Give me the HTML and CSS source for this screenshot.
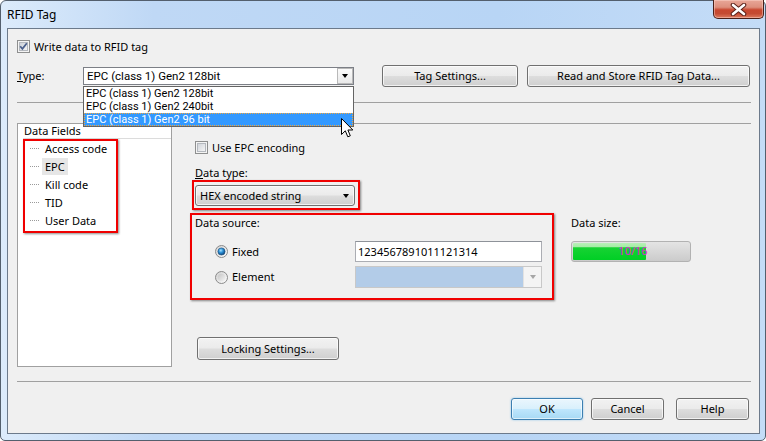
FILE: index.html
```html
<!DOCTYPE html>
<html>
<head>
<meta charset="utf-8">
<title>RFID Tag</title>
<link rel="stylesheet" href="styles.css">
</head>
<body>
<div class="window">
  <div class="titlebar">
    <span class="title">RFID Tag</span>
    <div class="close">
      <svg width="19" height="13" viewBox="0 0 19 13">
        <path d="M4 2 L15 11 M15 2 L4 11" stroke="#5a2018" stroke-width="4.6" stroke-linecap="round"/>
        <path d="M4 2 L15 11 M15 2 L4 11" stroke="#ffffff" stroke-width="2.6" stroke-linecap="round"/>
      </svg>
    </div>
  </div>
  <div class="content">
    <div class="row-write">
      <span class="chk">
        <svg width="13" height="13" viewBox="0 0 13 13">
          <defs><linearGradient id="g1" x1="0" y1="0" x2="1" y2="1"><stop offset="0" stop-color="#c9ced6"/><stop offset="1" stop-color="#f7f7f7"/></linearGradient></defs>
          <rect x="0.5" y="0.5" width="12" height="12" fill="#f4f4f4" stroke="#8e8f8f"/>
          <rect x="2.5" y="2.5" width="8" height="8" fill="url(#g1)" stroke="#b4b8be"/>
          <path d="M3.2 6.2 L5.4 8.8 L9.8 3.2" fill="none" stroke="#4a5f8c" stroke-width="1.7"/>
        </svg>
      </span>
      <span class="lbl">Write data to RFID tag</span>
    </div>

    <div class="row-type">
      <span class="type-label"><span class="ul">T</span>ype:</span>
      <div class="combo-wrap">
        <div class="combo">
          <span class="combo-text">EPC (class 1) Gen2 128bit</span>
          <span class="combo-btn"><span class="tri"></span></span>
        </div>
        <ul class="droplist">
          <li>EPC (class 1) Gen2 128bit</li>
          <li>EPC (class 1) Gen2 240bit</li>
          <li class="sel">EPC (class 1) Gen2 96 bit</li>
        </ul>
        <svg class="cursor" width="13" height="21" viewBox="0 0 13 21">
          <path d="M0.5 0.5 L0.5 16.5 L4.3 12.8 L6.8 18.8 L9.3 17.8 L6.9 12 L11.8 12 Z" fill="#ffffff" stroke="#000000" stroke-width="1" stroke-linejoin="miter"/>
        </svg>
      </div>
      <button class="btn btn-tag">Tag Settings...</button>
      <button class="btn btn-read">Read and Store RFID Tag Data...</button>
    </div>

    <div class="sep sep1"></div>

    <div class="main">
      <div class="tree">
        <div class="tree-head">Data Fields</div>
        <ul class="tree-items">
          <li><span class="dots"></span><span class="item">Access code</span></li>
          <li><span class="dots"></span><span class="item selected">EPC</span></li>
          <li><span class="dots"></span><span class="item">Kill code</span></li>
          <li><span class="dots"></span><span class="item">TID</span></li>
          <li><span class="dots"></span><span class="item">User Data</span></li>
        </ul>
        <div class="annot annot-tree"></div>
      </div>

      <div class="pane">
        <div class="use-epc">
          <span class="chk">
            <svg width="13" height="13" viewBox="0 0 13 13">
              <defs><linearGradient id="g2" x1="0" y1="0" x2="1" y2="1"><stop offset="0" stop-color="#cfd3d9"/><stop offset="1" stop-color="#f7f7f7"/></linearGradient></defs>
              <rect x="0.5" y="0.5" width="12" height="12" fill="#f4f4f4" stroke="#8e8f8f"/>
              <rect x="2.5" y="2.5" width="8" height="8" fill="url(#g2)" stroke="#b4b8be"/>
            </svg>
          </span>
          <span class="lbl">Use EPC encoding</span>
        </div>

        <div class="plabel dtype"><span class="ul">D</span>ata type:</div>

        <div class="redbox red1">
          <div class="ddl">
            <span class="ddl-text">HEX encoded string</span>
            <span class="tri"></span>
          </div>
        </div>

        <div class="src-row">
          <div class="redbox red2">
            <div class="plabel src-label">Data source:</div>
            <div class="opt-row fixed-row">
              <div class="opt">
                <svg width="13" height="13" viewBox="0 0 13 13">
                  <defs>
                    <linearGradient id="g3" x1="0" y1="0" x2="1" y2="1"><stop offset="0" stop-color="#d0d0d0"/><stop offset="1" stop-color="#ffffff"/></linearGradient>
                    <radialGradient id="g4" cx="0.4" cy="0.35" r="0.7"><stop offset="0" stop-color="#a6e2ff"/><stop offset="0.45" stop-color="#2a8fd6"/><stop offset="1" stop-color="#0b3d6e"/></radialGradient>
                  </defs>
                  <circle cx="6.5" cy="6.5" r="6" fill="url(#g3)" stroke="#8a8a8a"/>
                  <circle cx="6.5" cy="6.5" r="3.6" fill="url(#g4)" stroke="#1d4f7c" stroke-width="0.6"/>
                </svg>
                <span class="lbl">Fixed</span>
              </div>
              <div class="textbox">1234567891011121314</div>
            </div>
            <div class="opt-row elem-row">
              <div class="opt">
                <svg width="13" height="13" viewBox="0 0 13 13">
                  <defs>
                    <linearGradient id="g5" x1="0" y1="0" x2="1" y2="1"><stop offset="0" stop-color="#cfcfcf"/><stop offset="1" stop-color="#ffffff"/></linearGradient>
                    <linearGradient id="g6" x1="0" y1="0" x2="1" y2="1"><stop offset="0" stop-color="#c4c4c4"/><stop offset="1" stop-color="#f4f4f4"/></linearGradient>
                  </defs>
                  <circle cx="6.5" cy="6.5" r="6" fill="url(#g5)" stroke="#8a8a8a"/>
                  <circle cx="6.5" cy="6.5" r="3.8" fill="url(#g6)"/>
                </svg>
                <span class="lbl">Element</span>
              </div>
              <div class="dcombo">
                <span class="dcombo-field"></span>
                <span class="dcombo-btn"><span class="tri gray"></span></span>
              </div>
            </div>
          </div>

          <div class="size">
            <div class="plabel size-label">Data size:</div>
            <div class="progress">
              <div class="fill" style="width:62.5%"></div>
              <span class="ptext">10/16</span>
            </div>
          </div>
        </div>

        <button class="btn btn-lock">Locking Settings...</button>
      </div>
    </div>

    <div class="sep sep2"></div>

    <div class="footer">
      <button class="btn btn-ok">OK</button>
      <button class="btn btn-cancel">Cancel</button>
      <button class="btn btn-help">Help</button>
    </div>
  </div>
</div>
</body>
</html>
```

FILE: styles.css
```css
* { box-sizing: border-box; }
html, body { margin: 0; padding: 0; }
body {
  width: 766px;
  height: 441px;
  overflow: hidden;
  background: #ffffff;
  font-family: "Noto Sans", "Open Sans", "DejaVu Sans", sans-serif;
  font-size: 11px;
  color: #000;
}
ul { margin: 0; padding: 0; list-style: none; }
.ul { text-decoration: underline; }

.window {
  width: 766px;
  height: 441px;
  background: linear-gradient(90deg, #dcebfb 0%, #bfd8f5 20%, #b8d5f5 65%, #c4dcf7 100%);
  border: 1px solid #535f6d;
  border-radius: 6px 6px 5px 5px;
  padding: 0 5px 6px 6px;
  display: flex;
  flex-direction: column;
}

.titlebar {
  height: 27px;
  display: flex;
  align-items: flex-start;
  flex: none;
}
.title {
  padding-top: 7px;
  line-height: 14px;
  font-size: 12px;
  color: #000;
}
.close {
  margin-left: auto;
  margin-right: -4px;
  margin-top: -1px;
  width: 51px;
  height: 19px;
  border: 1px solid #4a1f18;
  border-top: none;
  border-radius: 0 0 5px 5px;
  background: linear-gradient(#e8a798 0%, #dd8f7d 40%, #c8472f 55%, #c44a32 75%, #dc7a5e 100%);
  box-shadow: inset 0 0 0 1px rgba(255, 220, 210, 0.45);
  display: flex;
  align-items: center;
  justify-content: center;
}

.content {
  flex: 1;
  background: #f0f0f0;
  border: 1px solid #6c7a8b;
  padding: 0 8px 0 9px;
  display: flex;
  flex-direction: column;
}

.chk { width: 13px; height: 13px; display: block; flex: none; }
.chk svg { display: block; }
.lbl { line-height: 14px; white-space: nowrap; }

.row-write {
  margin-top: 11px;
  height: 13px;
  display: flex;
  align-items: center;
  gap: 4px;
}

.row-type {
  margin-top: 12px;
  height: 22px;
  display: flex;
  align-items: center;
}
.type-label { width: 66px; line-height: 14px; }
.combo-wrap {
  position: relative;
  width: 271px;
  height: 18px;
}
.combo {
  width: 271px;
  height: 18px;
  background: #fff;
  border: 1px solid #7c7f86;
  display: flex;
  align-items: center;
}
.combo-text {
  flex: 1;
  padding-left: 3px;
  line-height: 14px;
  font-family: Roboto, "Noto Sans", sans-serif;
  font-size: 11.5px;
  white-space: nowrap;
}
.combo-btn {
  width: 16px;
  height: 16px;
  border: 1px solid #b9b9b9;
  background: linear-gradient(#fbfbfb, #e9e9e9);
  display: flex;
  align-items: center;
  justify-content: center;
}
.tri {
  width: 0;
  height: 0;
  border-left: 3.5px solid transparent;
  border-right: 3.5px solid transparent;
  border-top: 4px solid #000;
}
.tri.gray { border-top-color: #a6a6a6; }

.droplist {
  position: absolute;
  left: 0;
  top: 19px;
  width: 271px;
  background: #fff;
  border: 1px solid #646464;
  z-index: 5;
}
.droplist li {
  height: 13px;
  line-height: 13px;
  font-family: Roboto, "Noto Sans", sans-serif;
  font-size: 11px;
  padding-left: 2px;
  white-space: nowrap;
}
.droplist li.sel {
  background: #3399ff;
  color: #fff;
  outline: 1px dotted #f3a73c;
  outline-offset: -1px;
}
.cursor {
  position: absolute;
  left: 258px;
  top: 51px;
  z-index: 6;
}

.btn {
  font-family: inherit;
  font-size: 11px;
  color: #000;
  height: 22px;
  padding: 0;
  border: 1px solid #707070;
  border-radius: 3px;
  background: linear-gradient(#f2f2f2 0%, #ebebeb 48%, #dddddd 52%, #cfcfcf 100%);
  box-shadow: inset 0 0 0 1px rgba(255, 255, 255, 0.7);
  line-height: 18px;
  text-align: center;
  white-space: nowrap;
}
.btn-tag { margin-left: 28px; width: 136px; }
.btn-read { margin-left: 9px; width: 223px; }

.sep { height: 1px; background: #a0a0a0; flex: none; }
.sep1 { margin-top: 15px; }
.sep2 { margin-top: 14px; }

.main {
  margin-top: 20px;
  display: flex;
  align-items: flex-start;
  height: 244px;
}
.tree {
  position: relative;
  width: 155px;
  height: 244px;
  background: #fff;
  border: 1px solid #a0a0a0;
  flex: none;
}
.tree-head {
  height: 15px;
  line-height: 14px;
  border-bottom: 1px solid #dcdcdc;
  margin-left: 5px;
  padding-left: 1px;
}
.tree-items li {
  height: 18px;
  display: flex;
  align-items: center;
}
.dots {
  margin-left: 12px;
  width: 9px;
  border-top: 1px dotted #9a9a9a;
}
.item {
  margin-left: 3px;
  padding: 0 3px;
  height: 17px;
  line-height: 17px;
  white-space: nowrap;
}
.item.selected { background: #e6e6e6; }
.annot {
  position: absolute;
  border: 2px solid #f00000;
  box-shadow: 1px 1px 2px rgba(0, 0, 0, 0.45);
}
.annot-tree { left: 5px; top: 15px; width: 95px; height: 94px; }

.pane {
  flex: 1;
  border-top: 1px solid #a0a0a0;
  height: 244px;
  display: flex;
  flex-direction: column;
  align-items: flex-start;
}
.use-epc {
  margin-top: 17px;
  margin-left: 23px;
  height: 13px;
  display: flex;
  align-items: center;
  gap: 4px;
}
.plabel { line-height: 14px; height: 14px; white-space: nowrap; }
.dtype { margin-top: 12px; margin-left: 23px; }

.redbox {
  border: 2px solid #f00000;
  box-shadow: 1px 1px 2px rgba(0, 0, 0, 0.45);
}
.red1 {
  margin-left: 20px;
  width: 168px;
  height: 30px;
  padding: 3px 0 0 1px;
}
.ddl {
  width: 160px;
  height: 21px;
  border: 1px solid #707070;
  border-radius: 3px;
  background: linear-gradient(#f2f2f2 0%, #ebebeb 48%, #dddddd 52%, #cfcfcf 100%);
  box-shadow: inset 0 0 0 1px rgba(255, 255, 255, 0.7);
  display: flex;
  align-items: center;
  padding: 0 5px 0 4px;
}
.ddl-text { flex: 1; line-height: 14px; }

.src-row {
  margin-top: 3px;
  display: flex;
  align-items: flex-start;
}
.red2 {
  margin-left: 18px;
  width: 364px;
  height: 87px;
  display: flex;
  flex-direction: column;
}
.src-label { margin-top: 1px; margin-left: 3px; }
.opt-row { display: flex; align-items: center; }
.fixed-row { margin-top: 11px; height: 21px; }
.elem-row { margin-top: 4px; height: 22px; }
.opt {
  width: 163px;
  padding-left: 23px;
  display: flex;
  align-items: center;
  gap: 4px;
}
.opt svg { display: block; flex: none; }
.textbox {
  width: 187px;
  height: 21px;
  background: #fff;
  border: 1px solid #abadb3;
  border-top-color: #8e9299;
  padding-left: 2px;
  line-height: 19px;
}
.dcombo {
  width: 187px;
  height: 22px;
  border: 1px solid #c8c8c8;
  display: flex;
}
.dcombo-field { flex: 1; background: #b3cce8; }
.dcombo-btn {
  width: 18px;
  background: #f4f4f4;
  border-left: 1px solid #e2e2e2;
  display: flex;
  align-items: center;
  justify-content: center;
}

.size { margin-left: 17px; margin-top: 3px; }
.progress {
  position: relative;
  margin-top: 11px;
  width: 120px;
  height: 21px;
  border: 1px solid #b2b2b2;
  border-radius: 3px;
  background: linear-gradient(#e4e4e4, #cbcbcb);
  padding: 1px;
  display: flex;
}
.fill {
  height: 100%;
  border-radius: 1px;
  background: linear-gradient(#b8f0b8 0%, #a6eca6 22%, #17d233 28%, #00cf25 100%);
}
.ptext {
  position: absolute;
  left: 0;
  right: 0;
  top: 2px;
  padding-left: 4px;
  text-align: center;
  line-height: 14px;
  color: #e020d8;
}

.btn-lock { margin-top: 37px; margin-left: 25px; width: 142px; height: 23px; }

.footer {
  margin-top: 16px;
  display: flex;
  justify-content: flex-end;
  padding-right: 2px;
}
.btn-ok {
  width: 72px;
  margin-right: 8px;
  border-color: #3c7fb1;
  background: linear-gradient(#eaf6fd 0%, #d9f0fc 48%, #bee6fd 52%, #a7d9f5 100%);
  box-shadow: inset 0 0 0 1px rgba(255, 255, 255, 0.6), 0 0 2px rgba(60, 160, 230, 0.6);
}
.btn-cancel { width: 73px; margin-right: 12px; }
.btn-help { width: 73px; }
```
